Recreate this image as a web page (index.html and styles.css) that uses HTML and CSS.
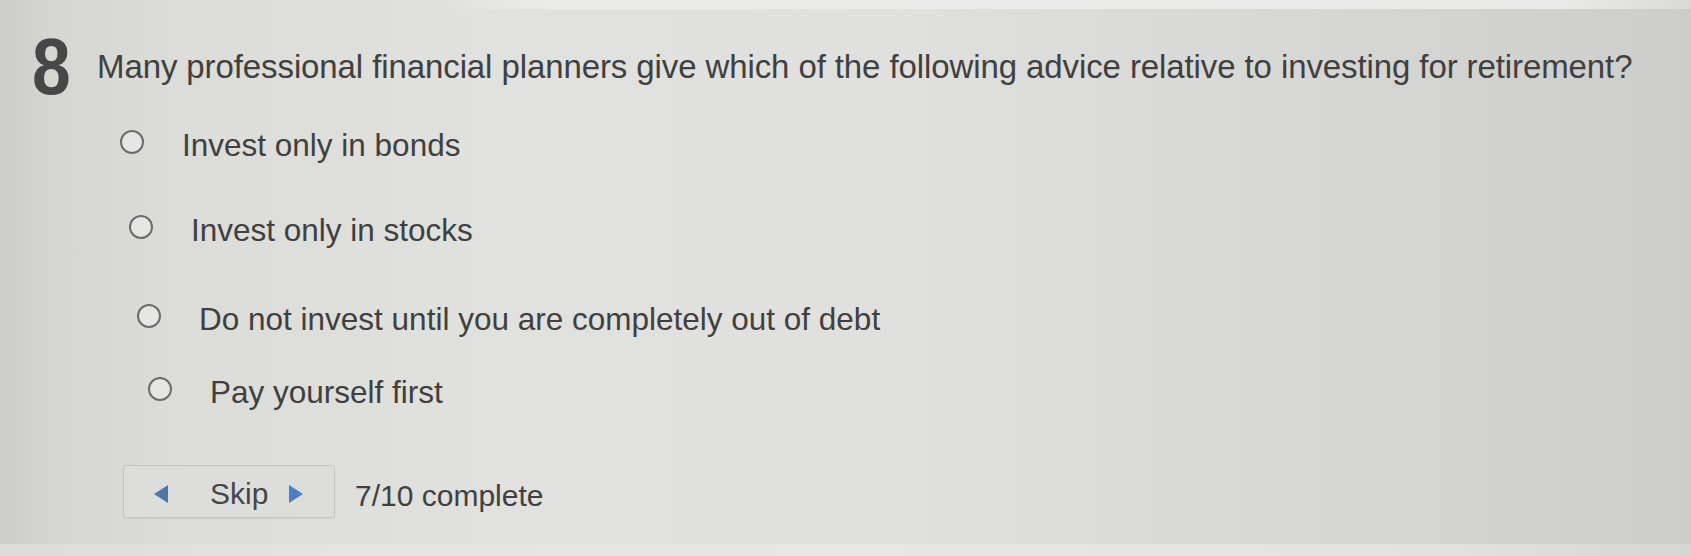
FILE: index.html
```html
<!DOCTYPE html>
<html lang="en">
<head>
<meta charset="utf-8">
<title>Question 8</title>
<link rel="stylesheet" href="styles.css">
</head>
<body>
<main class="page">
  <section class="question">
    <div class="qnum">8</div>
    <h1 class="qtext">Many professional financial planners give which of the following advice relative to investing for retirement?</h1>
  </section>
  <ul class="options">
    <li class="option"><span class="radio"></span><span class="label">Invest only in bonds</span></li>
    <li class="option"><span class="radio"></span><span class="label">Invest only in stocks</span></li>
    <li class="option"><span class="radio"></span><span class="label">Do not invest until you are completely out of debt</span></li>
    <li class="option"><span class="radio"></span><span class="label">Pay yourself first</span></li>
  </ul>
  <footer class="nav">
    <div class="skip">
      <svg class="arrow arrow-left" viewBox="0 0 16 20" width="16" height="20"><polygon points="15,1 15,19 1,10" /></svg>
      <span class="skip-label">Skip</span>
      <svg class="arrow arrow-right" viewBox="0 0 16 20" width="16" height="20"><polygon points="1,1 1,19 15,10" /></svg>
    </div>
    <span class="progress">7/10 complete</span>
  </footer>
</main>
<div class="bottom-band"></div>
</body>
</html>
```

FILE: styles.css
```css
html, body {
  margin: 0;
  padding: 0;
}

body {
  width: 1691px;
  height: 556px;
  overflow: hidden;
  display: flex;
  flex-direction: column;
  font-family: "Liberation Sans", Arial, sans-serif;
  color: #404040;
  background:
    linear-gradient(90deg, rgba(236,236,236,0) 0px, rgba(236,236,236,0) 440px, rgba(238,238,238,0.85) 560px, rgba(238,238,238,0.85) 1560px, rgba(230,230,230,0.5) 1691px) top left / 100% 9px no-repeat,
    linear-gradient(90deg, #cdcdc9 0px, #d6d6d2 60px, #dcdcd8 180px, #e1e1df 500px, #e0e0de 900px, #d7d7d5 1300px, #cdcdcb 1691px);
}

.page {
  flex: 1;
  padding: 25px 0 0 32px;
  display: flex;
  flex-direction: column;
}

.question {
  display: flex;
  align-items: flex-start;
}

.qnum {
  font-size: 79px;
  line-height: 1;
  font-weight: bold;
  color: #474747;
  width: 65px;
  margin-top: 2px;
  transform: scaleX(0.88);
  transform-origin: left center;
}

.qtext {
  margin: 22px 0 0 0;
  font-size: 33px;
  line-height: 40px;
  font-weight: normal;
  color: #404040;
  letter-spacing: -0.1px;
}

.options {
  list-style: none;
  margin: 19px 0 0 0;
  padding: 0;
  display: flex;
  flex-direction: column;
}

.option {
  display: flex;
  align-items: flex-start;
  gap: 38px;
  font-size: 31.5px;
  line-height: 40px;
  color: #404040;
}

.option:nth-child(1) { margin-left: 88px; }
.option:nth-child(2) { margin-left: 97px; margin-top: 45px; }
.option:nth-child(3) { margin-left: 105px; margin-top: 49px; }
.option:nth-child(4) { margin-left: 116px; margin-top: 33px; }

.radio {
  flex: none;
  width: 20px;
  height: 20px;
  margin-top: 5px;
  border: 2px solid #6c6c6c;
  border-radius: 50%;
  background: #e6e6e4;
}

.nav {
  margin: 53px 0 0 91px;
  display: flex;
  align-items: center;
  gap: 20px;
}

.skip {
  display: flex;
  align-items: center;
  height: 53px;
  box-sizing: border-box;
  width: 212px;
  padding: 5px 0 0 29px;
  border: 1.5px solid #c4c4c0;
  border-radius: 3px;
  background: #dddddb;
  box-shadow: 0 1px 1px rgba(0,0,0,0.06);
}

.arrow {
  flex: none;
}

.arrow-left polygon { fill: #4f76a6; }
.arrow-right polygon { fill: #4a7fc4; }

.skip-label {
  margin: 0 20px 0 41px;
  font-size: 30px;
  color: #464646;
}

.progress {
  font-size: 30px;
  color: #404040;
  margin-top: 8px;
}

.bottom-band {
  height: 12px;
  background: linear-gradient(90deg, #dcdcd8 0%, #e4e4e0 20%, #e8e8e6 50%, #e2e2e0 85%, #d6d6d4 100%);
}
```
